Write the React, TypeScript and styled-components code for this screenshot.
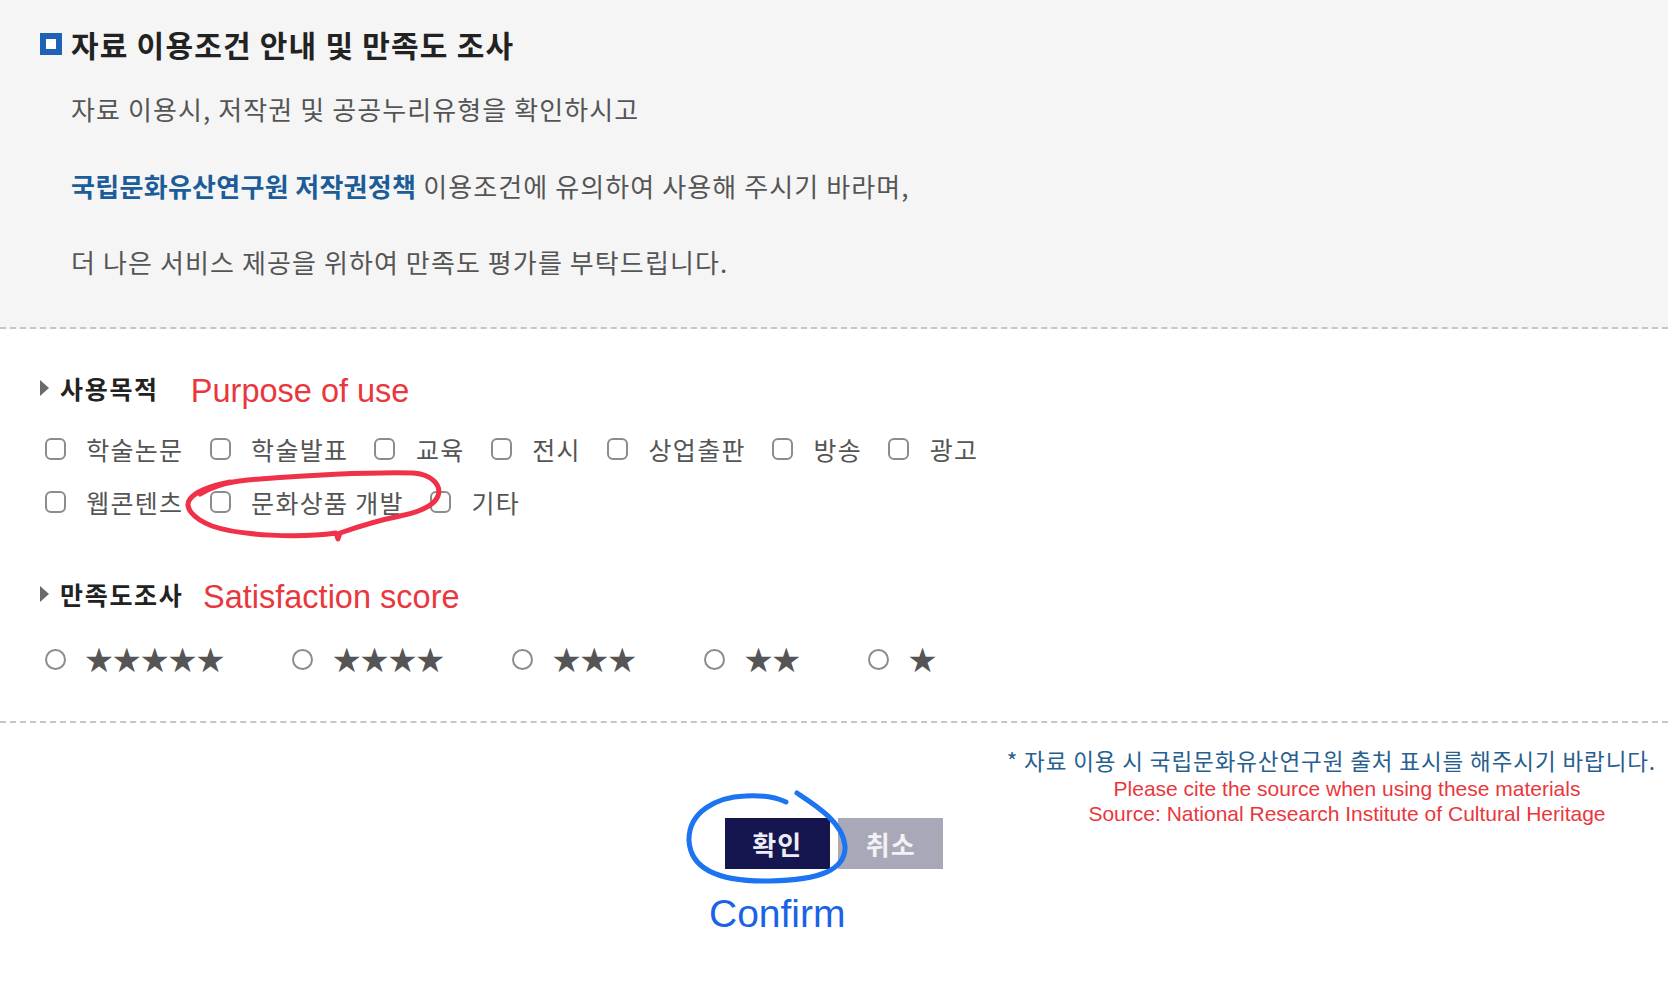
import React from "react";
import styled, { createGlobalStyle } from "styled-components";

const GlobalStyle = createGlobalStyle`
  html, body { margin: 0; padding: 0; background: #ffffff; }
  body {
    font-family: "Noto Sans CJK KR", "Noto Sans", sans-serif;
    -webkit-font-smoothing: antialiased;
  }
`;

const Page = styled.div`
  position: relative;
  width: 1668px;
  min-height: 992px;
  background: #ffffff;
  overflow: hidden;
`;

const Intro = styled.section`
  background: #f5f5f5;
  padding: 27px 40px 26px;
  border-bottom: 2px dashed #c6c6c6;
`;

const Title = styled.h2`
  display: flex;
  align-items: center;
  gap: 9px;
  margin: 0;
  font-size: 30px;
  font-weight: 700;
  letter-spacing: 1.2px;
  line-height: 34px;
  color: #222222;
`;

const TitleIcon = styled.span`
  display: inline-block;
  flex: none;
  width: 22px;
  height: 22px;
  box-sizing: border-box;
  background: #ffffff;
  border: 6px solid #1f62b5;
`;

const IntroBody = styled.div`
  margin-top: 10px;
  padding-left: 31px;
`;

const IntroLine = styled.p`
  margin: 0;
  font-size: 26px;
  letter-spacing: 1.1px;
  line-height: 76.6px;
  color: #555555;
`;

const PolicyLink = styled.a`
  color: #1c5d99;
  font-weight: 700;
  text-decoration: none;
  letter-spacing: 0.3px;
`;

const Survey = styled.section`
  padding: 39px 0 46px 40px;
  border-bottom: 2px dashed #c6c6c6;
`;

const Heading = styled.div<{ $top?: number }>`
  display: flex;
  align-items: center;
  height: 40px;
  margin-top: ${(p) => p.$top ?? 0}px;
`;

const Triangle = styled.span`
  width: 0;
  height: 0;
  border-top: 8px solid transparent;
  border-bottom: 8px solid transparent;
  border-left: 9px solid #6a6a6a;
  margin-right: 11px;
`;

const HeadingText = styled.span`
  font-size: 25px;
  font-weight: 700;
  letter-spacing: 1.7px;
  color: #222222;
  line-height: 40px;
`;

const RedNote = styled.span<{ $gap: number }>`
  margin-left: ${(p) => p.$gap}px;
  font-family: "Liberation Sans", Arial, sans-serif;
  font-size: 32.5px;
  color: #e8383d;
  line-height: 40px;
  position: relative;
  top: 3px;
`;

const CheckList = styled.div`
  display: flex;
  flex-wrap: wrap;
  max-width: 1000px;
  row-gap: 23px;
  column-gap: 26.2px;
  margin-top: 26px;
  padding-left: 4.7px;
`;

const Option = styled.label`
  display: flex;
  align-items: center;
  gap: 20.5px;
  height: 30px;
`;

const CheckBox = styled.input.attrs({ type: "checkbox" })`
  appearance: none;
  margin: 0;
  width: 21px;
  height: 22px;
  box-sizing: border-box;
  border: 2.5px solid #8c8c8c;
  border-radius: 6px;
  background: #ffffff;
`;

const OptionText = styled.span`
  font-size: 25px;
  letter-spacing: 1.3px;
  line-height: 30px;
  color: #555555;
  white-space: nowrap;
`;

const RadioRow = styled.div`
  display: flex;
  gap: 69.3px;
  margin-top: 31px;
  padding-left: 4.7px;
`;

const RadioOption = styled.label`
  display: flex;
  align-items: center;
  gap: 18px;
  height: 30px;
`;

const Radio = styled.input.attrs({ type: "radio", name: "score" })`
  appearance: none;
  margin: 0;
  width: 21px;
  height: 21px;
  box-sizing: border-box;
  border: 2.5px solid #8c8c8c;
  border-radius: 50%;
  background: #ffffff;
`;

const Stars = styled.span`
  font-family: "DejaVu Sans", sans-serif;
  font-size: 34px;
  letter-spacing: -2.6px;
  line-height: 30px;
  color: #555555;
  white-space: nowrap;
`;

const Footer = styled.footer`
  position: relative;
  padding-top: 22px;
`;

const FooterNote = styled.p`
  margin: 0;
  padding-right: 12px;
  text-align: right;
  font-size: 22.5px;
  letter-spacing: 0.9px;
  line-height: 30px;
  color: #27608f;
`;

const CiteNote = styled.div`
  position: absolute;
  top: 53px;
  left: 1047px;
  width: 600px;
  text-align: center;
  font-family: "Liberation Sans", Arial, sans-serif;
  font-size: 21px;
  line-height: 25px;
  color: #e8383d;
`;

const ButtonRow = styled.div`
  display: flex;
  justify-content: center;
  align-items: flex-start;
  gap: 8.5px;
  margin-top: 43px;
`;

const ButtonColumn = styled.div`
  display: flex;
  flex-direction: column;
  align-items: center;
  width: 105px;
`;

const Button = styled.button<{ $variant: "primary" | "cancel" }>`
  width: 105px;
  height: 51px;
  border: 0;
  padding: 0;
  font-family: "Noto Sans CJK KR", sans-serif;
  font-size: 26px;
  font-weight: 700;
  letter-spacing: 1px;
  color: ${(p) => (p.$variant === "primary" ? "#ececf4" : "#f2f2f6")};
  background: ${(p) => (p.$variant === "primary" ? "#15154f" : "#a8a8b8")};
`;

const Caption = styled.span`
  margin-top: 23px;
  font-family: "Liberation Sans", Arial, sans-serif;
  font-size: 39px;
  line-height: 44px;
  color: #1a63e6;
  white-space: nowrap;
`;

const Overlay = styled.svg`
  position: absolute;
  left: 0;
  top: 0;
  width: 1668px;
  height: 992px;
  pointer-events: none;
`;

const purposes = [
  "학술논문",
  "학술발표",
  "교육",
  "전시",
  "상업출판",
  "방송",
  "광고",
  "웹콘텐츠",
  "문화상품 개발",
  "기타",
];

const scores = [5, 4, 3, 2, 1];

export default function App() {
  return (
    <Page>
      <GlobalStyle />
      <Intro>
        <Title>
          <TitleIcon />
          자료 이용조건 안내 및 만족도 조사
        </Title>
        <IntroBody>
          <IntroLine>자료 이용시, 저작권 및 공공누리유형을 확인하시고</IntroLine>
          <IntroLine>
            <PolicyLink href="#">국립문화유산연구원 저작권정책</PolicyLink> 이용조건에 유의하여 사용해 주시기 바라며,
          </IntroLine>
          <IntroLine>더 나은 서비스 제공을 위하여 만족도 평가를 부탁드립니다.</IntroLine>
        </IntroBody>
      </Intro>

      <Survey>
        <Heading>
          <Triangle />
          <HeadingText>사용목적</HeadingText>
          <RedNote $gap={32}>Purpose of use</RedNote>
        </Heading>
        <CheckList>
          {purposes.map((p) => (
            <Option key={p}>
              <CheckBox />
              <OptionText>{p}</OptionText>
            </Option>
          ))}
        </CheckList>

        <Heading $top={57}>
          <Triangle />
          <HeadingText>만족도조사</HeadingText>
          <RedNote $gap={19.5}>Satisfaction score</RedNote>
        </Heading>
        <RadioRow>
          {scores.map((s) => (
            <RadioOption key={s}>
              <Radio />
              <Stars>{"★".repeat(s)}</Stars>
            </RadioOption>
          ))}
        </RadioRow>
      </Survey>

      <Footer>
        <FooterNote>* 자료 이용 시 국립문화유산연구원 출처 표시를 해주시기 바랍니다.</FooterNote>
        <CiteNote>
          Please cite the source when using these materials
          <br />
          Source: National Research Institute of Cultural Heritage
        </CiteNote>
        <ButtonRow>
          <ButtonColumn>
            <Button $variant="primary">확인</Button>
            <Caption>Confirm</Caption>
          </ButtonColumn>
          <Button $variant="cancel">취소</Button>
        </ButtonRow>
      </Footer>

      <Overlay viewBox="0 0 1668 992">
        <path
          d="M 200 494 C 215 485, 235 480, 260 479 C 300 476, 360 472, 413 473 C 430 474, 442 484, 438 496 C 434 506, 420 512, 400 516 C 380 520, 360 526, 340 533 L 338 539 L 336 533 C 300 538, 240 536, 212 526 C 192 518, 184 507, 190 499 C 196 491, 210 486, 230 482"
          fill="none"
          stroke="#f0314a"
          strokeWidth="5"
          strokeLinecap="round"
          strokeLinejoin="round"
        />
        <path
          d="M 797 793 C 815 805, 843 822, 845 846 C 846 870, 820 880, 770 881 C 720 882, 691 870, 689 841 C 688 811, 718 797, 745 796 C 760 795, 775 797, 786 802"
          fill="none"
          stroke="#1c74f0"
          strokeWidth="5"
          strokeLinecap="round"
          strokeLinejoin="round"
        />
      </Overlay>
    </Page>
  );
}
